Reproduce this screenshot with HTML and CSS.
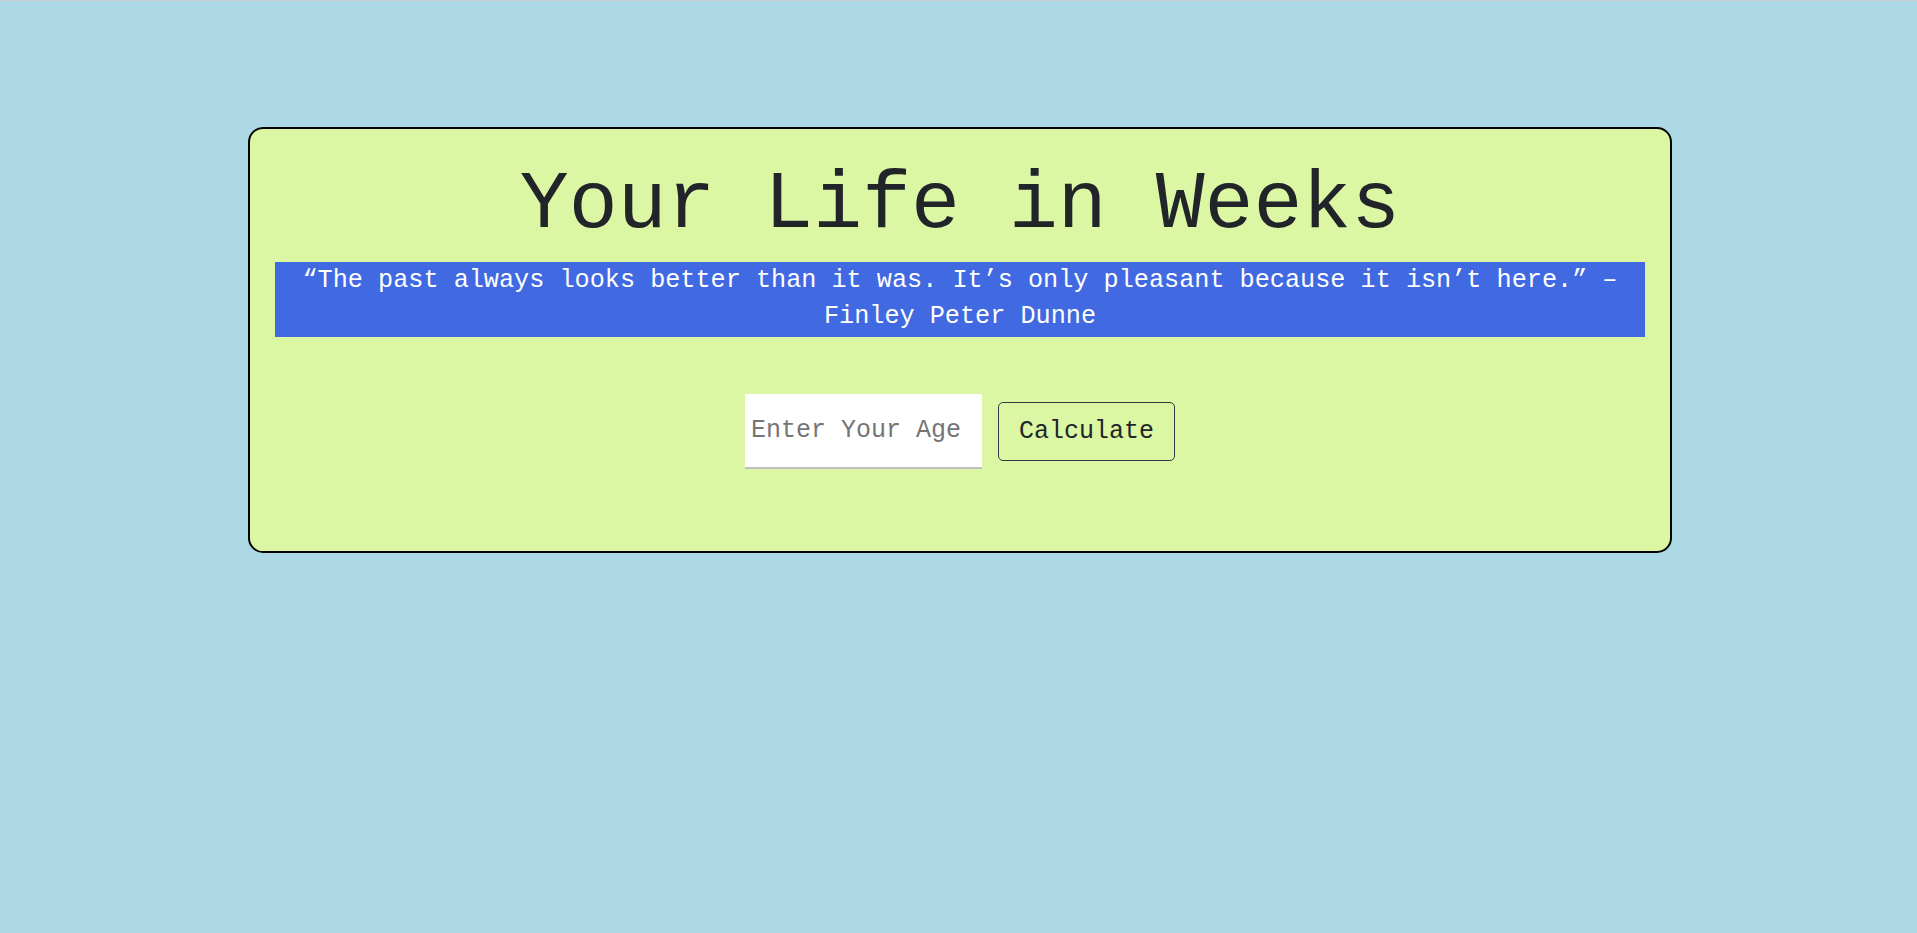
FILE: index.html
```html
<!DOCTYPE html>
<html lang="en">
<head>
<meta charset="utf-8">
<title>Your Life in Weeks</title>
<link rel="stylesheet" href="styles.css">
</head>
<body>
  <main class="card">
    <h1 class="title">Your Life in Weeks</h1>
    <p class="quote">“The past always looks better than it was. It’s only pleasant because it isn’t here.” – Finley Peter Dunne</p>
    <form class="age-form">
      <input class="age-input" type="text" placeholder="Enter Your Age">
      <button class="calc-btn" type="button">Calculate</button>
    </form>
  </main>
</body>
</html>
```

FILE: styles.css
```css
html {
  border-top: 1px solid #c9cdcf;
  background: #add8e6;
}

body {
  margin: 0;
  padding: 126px 0 0 3px;
  font-family: "Liberation Mono", "DejaVu Sans Mono", monospace;
  color: #212529;
}

.card {
  width: 1424px;
  box-sizing: border-box;
  margin: 0 auto;
  background: #dbf7a4;
  border: 2px solid #000;
  border-radius: 15px;
  padding: 28px 25px 82px 25px;
}

.title {
  margin: 0 0 9px;
  font-size: 81.5px;
  font-weight: 400;
  line-height: 96px;
  text-align: center;
  color: #212529;
}

.quote {
  margin: 0;
  background: #4169e1;
  color: #fff;
  font-size: 25.2px;
  line-height: 36px;
  padding: 1px 0 2px;
  text-align: center;
}

.age-form {
  margin-top: 57px;
  display: flex;
  justify-content: center;
  align-items: center;
  gap: 16px;
}

.age-input {
  width: 237px;
  height: 75px;
  box-sizing: border-box;
  border: none;
  border-bottom: 2px solid #c0c0c0;
  background: #fff;
  padding: 0 6px;
  font-family: "Liberation Mono", "DejaVu Sans Mono", monospace;
  font-size: 25px;
  color: #212529;
  outline: none;
}

.age-input::placeholder {
  color: #757575;
}

.calc-btn {
  width: 177px;
  height: 59px;
  box-sizing: border-box;
  border: 1px solid #343a40;
  border-radius: 5px;
  background: transparent;
  font-family: "Liberation Mono", "DejaVu Sans Mono", monospace;
  font-size: 25px;
  color: #212529;
  padding: 0;
  cursor: pointer;
}
```
